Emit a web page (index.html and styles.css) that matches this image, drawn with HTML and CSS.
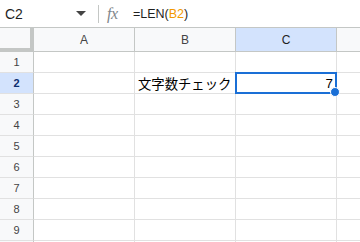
FILE: index.html
```html
<!DOCTYPE html>
<html>
<head>
  <meta charset="utf-8">
  <title>Sheet</title>
  <link rel="stylesheet" href="styles.css">
</head>
<body>
  <div class="formula-bar">
    <div class="name-box">C2</div>
    <div class="name-drop">
      <svg width="10" height="6" viewBox="0 0 10 6"><path d="M0 0h10L5 5z" fill="#444"/></svg>
    </div>
    <div class="fb-sep"></div>
    <div class="fx">fx</div>
    <div class="formula">=LEN(<span class="ref">B2</span>)</div>
  </div>

  <div class="grid">
    <div class="corner"></div>
    <div class="col-head">A</div>
    <div class="col-head">B</div>
    <div class="col-head sel">C</div>
    <div class="col-head last"></div>

    <div class="row-head">1</div><div class="cell"></div><div class="cell"></div><div class="cell"></div><div class="cell last"></div>
    <div class="row-head sel">2</div><div class="cell"></div><div class="cell text">文字数チェック</div><div class="cell num active">7<span class="handle"></span></div><div class="cell last"></div>
    <div class="row-head">3</div><div class="cell"></div><div class="cell"></div><div class="cell"></div><div class="cell last"></div>
    <div class="row-head">4</div><div class="cell"></div><div class="cell"></div><div class="cell"></div><div class="cell last"></div>
    <div class="row-head">5</div><div class="cell"></div><div class="cell"></div><div class="cell"></div><div class="cell last"></div>
    <div class="row-head">6</div><div class="cell"></div><div class="cell"></div><div class="cell"></div><div class="cell last"></div>
    <div class="row-head">7</div><div class="cell"></div><div class="cell"></div><div class="cell"></div><div class="cell last"></div>
    <div class="row-head">8</div><div class="cell"></div><div class="cell"></div><div class="cell"></div><div class="cell last"></div>
    <div class="row-head">9</div><div class="cell"></div><div class="cell"></div><div class="cell"></div><div class="cell last"></div>
    <div class="row-head"></div><div class="cell"></div><div class="cell"></div><div class="cell"></div><div class="cell last"></div>
  </div>
</body>
</html>
```

FILE: styles.css
```css
html,
body {
  margin: 0;
  padding: 0;
}

body {
  width: 360px;
  height: 242px;
  overflow: hidden;
  background: #fff;
  font-family: "Liberation Sans", Arial, "Noto Sans CJK JP", sans-serif;
  color: #1f1f1f;
}

.formula-bar {
  display: flex;
  align-items: center;
  height: 27px;
  border-bottom: 1px solid #c4c7c5;
}
.name-box {
  width: 71px;
  padding-left: 5px;
  font-size: 14px;
}
.name-drop {
  width: 18px;
  display: flex;
  align-items: center;
  padding-top: 1px;
}
.fb-sep {
  width: 1px;
  height: 18px;
  background: #c4c7c5;
  margin: 0 8px 0 4px;
}
.fx {
  width: 26px;
  font-family: "Liberation Serif", serif;
  font-style: italic;
  font-size: 16px;
  color: #80868b;
  letter-spacing: -0.5px;
}
.formula {
  font-family: "Liberation Sans", Arial, sans-serif;
  font-size: 12.5px;
}
.formula .ref {
  color: #f29900;
}

.grid {
  display: grid;
  grid-template-columns: 34px 101px 101px 101px 1fr;
  grid-template-rows: 24px repeat(10, 21px);
}

.corner {
  box-sizing: border-box;
  background: #f8f9fa;
  border-right: 4px solid #c4c7c5;
  border-bottom: 4px solid #c4c7c5;
}
.col-head {
  box-sizing: border-box;
  border-right: 1px solid #c4c7c5;
  border-bottom: 1px solid #c4c7c5;
  background: #f8f9fa;
  font-size: 12px;
  color: #444;
  display: flex;
  align-items: center;
  justify-content: center;
}
.col-head.sel {
  background: #d3e3fd;
  color: #1f1f1f;
}
.col-head.last {
  border-right: 0;
}
.row-head {
  box-sizing: border-box;
  border-right: 1px solid #c4c7c5;
  border-bottom: 1px solid #e1e1e1;
  background: #f8f9fa;
  font-size: 11px;
  color: #444;
  display: flex;
  align-items: center;
  justify-content: center;
}
.row-head.sel {
  background: #d3e3fd;
  color: #0b2d6e;
  font-weight: bold;
}

.cell {
  box-sizing: border-box;
  border-right: 1px solid #e1e1e1;
  border-bottom: 1px solid #e1e1e1;
  font-size: 13.33px;
  display: flex;
  align-items: center;
  padding: 0 3px;
  white-space: nowrap;
}
.cell.last {
  border-right: 0;
}
.cell.text {
  font-family: "Liberation Sans", "Noto Sans CJK JP", sans-serif;
  color: #000;
}
.cell.num {
  justify-content: flex-end;
  color: #000;
}
.cell.active {
  position: relative;
  margin: -1px 0 0 -1px;
  height: 22px;
  border: 2px solid #1a6fd6;
  padding-right: 2px;
}
.handle {
  position: absolute;
  right: -5px;
  bottom: -5px;
  width: 8px;
  height: 8px;
  border-radius: 50%;
  background: #1a6fd6;
  border: 1px solid #fff;
}
```
